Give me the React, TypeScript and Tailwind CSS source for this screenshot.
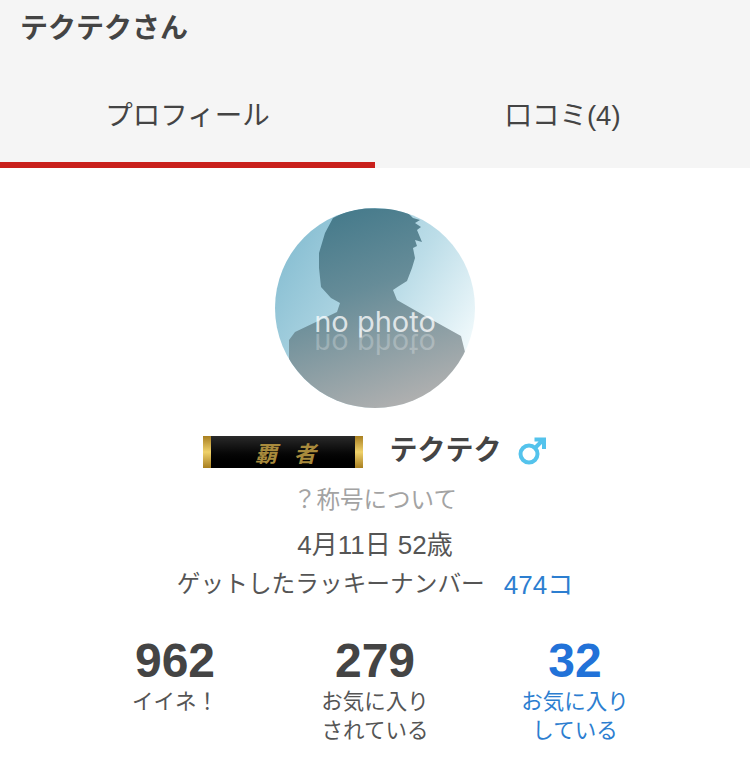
const font = '[font-family:"Liberation_Sans","Noto_Sans_CJK_JP",sans-serif]'

function NoPhoto() {
  return (
    <div className="relative h-[200px] w-[200px] overflow-hidden rounded-full">
      <svg width="200" height="200" viewBox="0 0 200 200" aria-hidden="true">
        <defs>
          <linearGradient id="sky" x1="0.1" y1="0.2" x2="0.95" y2="0.75">
            <stop offset="0" stopColor="#8cc1d4" />
            <stop offset="0.55" stopColor="#bcdde8" />
            <stop offset="1" stopColor="#f2fafc" />
          </linearGradient>
          <linearGradient id="figure" x1="0.3" y1="0" x2="0.62" y2="1">
            <stop offset="0" stopColor="#457a8b" />
            <stop offset="0.4" stopColor="#668c98" />
            <stop offset="1" stopColor="#b0b0b0" />
          </linearGradient>
        </defs>
        <rect width="200" height="200" fill="url(#sky)" />
        <path
          d="M58 10 L70 4 L88 0 L120 1 L132 4 L138 10 L145 12 L140 15 L146 19 L142 22 L147 34 L140 32 L142 38 L138 40 L140 50 L137 60 L132 73 L124 78 L118 82 L122 92 L150 108 L186 128 L189 140 L190 144 L180 200 L20 200 L14 152 L14 132 L20 124 L62 104 L65 95 L56 90 L46 79 L44 60 L44 45 L50 25 Z"
          fill="url(#figure)"
        />
      </svg>
      <div className="absolute left-0 top-[102px] w-full text-center text-[29px] leading-[23px] text-white/75 [font-family:'Inter',sans-serif]">
        no photo
      </div>
      <div className="absolute left-0 top-[125px] w-full -scale-y-100 text-center text-[29px] leading-[23px] text-white/25 [font-family:'Inter',sans-serif]">
        no photo
      </div>
    </div>
  )
}

function RankBadge() {
  return (
    <div className="flex h-[32px] w-[160px] bg-gradient-to-b from-[#2a2a2a] to-black">
      <div className="h-full w-2 bg-gradient-to-b from-[#a87f1e] via-[#f0d26a] to-[#a87f1e]" />
      <div className="flex flex-1 items-center justify-center gap-[17px] pl-[4px] text-[22px] font-bold italic leading-none text-[#a88a3c] [font-family:'Noto_Sans_CJK_JP',serif]">
        <span>覇</span>
        <span>者</span>
      </div>
      <div className="h-full w-2 bg-gradient-to-b from-[#a87f1e] via-[#f0d26a] to-[#a87f1e]" />
    </div>
  )
}

function MaleIcon() {
  return (
    <svg width="30" height="30" viewBox="0 0 30 30" fill="none" stroke="#54c3ec" strokeWidth="4" aria-hidden="true">
      <circle cx="12" cy="18" r="8.5" />
      <path d="M18 12 L27 3 M17.5 3.5 H27 V13" />
    </svg>
  )
}

function Stat({ value, label, active }: { value: string; label: string[]; active?: boolean }) {
  return (
    <div className={`flex w-[200px] flex-col items-center ${active ? 'text-[#2272d8]' : 'text-[#444]'}`}>
      <div className="text-[48px] font-bold leading-[54px]">{value}</div>
      <div className={`text-center text-[21.5px] leading-[29px] ${active ? 'text-[#2c7ed0]' : 'text-[#555]'}`}>
        {label.map((line) => (
          <div key={line}>{line}</div>
        ))}
      </div>
    </div>
  )
}

export default function App() {
  return (
    <div className={`h-[774px] w-[750px] overflow-hidden bg-white ${font}`}>
      <header className="h-[168px] bg-[#f5f5f5]">
        <div className="h-[66px] pl-5 pt-[10px] text-[28px] font-bold leading-[38px] text-[#444]">テクテクさん</div>
        <div className="flex h-[102px]">
          <div className="flex flex-1 items-center justify-center border-b-[6px] border-[#c9201c] pt-[4px] text-[27.5px] text-[#444]">
            プロフィール
          </div>
          <div className="flex flex-1 items-center justify-center pb-[2px] text-[27.5px] text-[#444]">口コミ(4)</div>
        </div>
      </header>

      <main className="flex flex-col items-center pt-10">
        <NoPhoto />
        <div className="mt-[22px] flex h-[44px] items-center">
          <RankBadge />
          <span className="mb-[2px] ml-[26px] text-[28px] font-bold text-[#444]">テクテク</span>
          <span className="mb-[3px] ml-[15px]">
            <MaleIcon />
          </span>
        </div>
        <div className="mt-[8px] text-[23.5px] leading-[36px] text-[#a3a3a3]">？称号について</div>
        <div className="mt-[9px] text-[26px] leading-[36px] text-[#555]">4月11日 52歳</div>
        <div className="mt-[2px] flex text-[23.7px] leading-[38px]">
          <span className="text-[#555]">ゲットしたラッキーナンバー</span>
          <span className="ml-[19px] mt-[1px] text-[26px] text-[#2c7ed0]">474コ</span>
        </div>
        <div className="mt-[30px] flex w-[750px] justify-center">
          <Stat value="962" label={['イイネ！']} />
          <Stat value="279" label={['お気に入り', 'されている']} />
          <Stat value="32" label={['お気に入り', 'している']} active />
        </div>
      </main>
    </div>
  )
}
